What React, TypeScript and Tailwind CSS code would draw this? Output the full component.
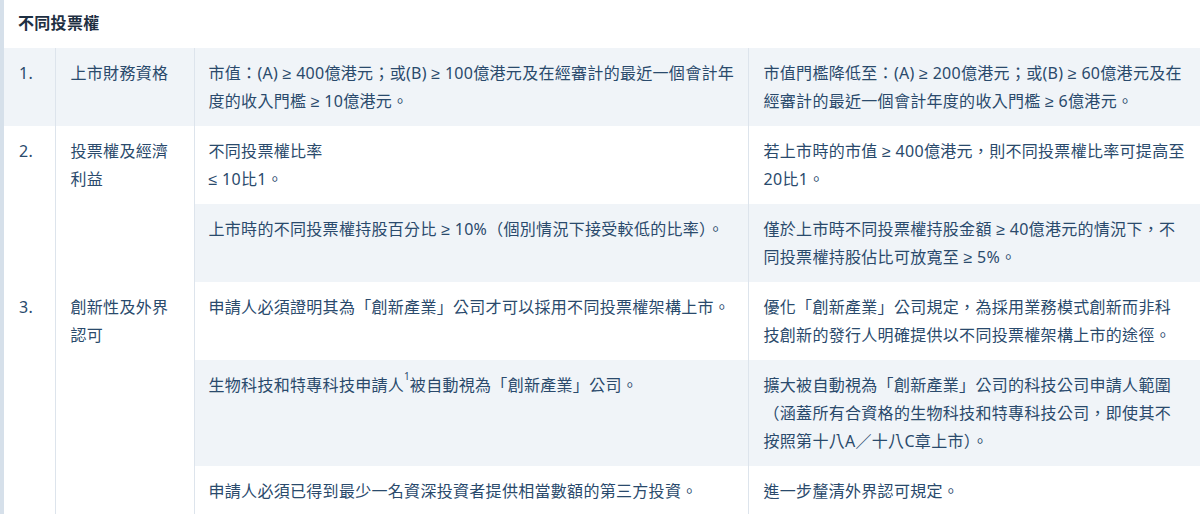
import React from 'react';

type Sub = { current: React.ReactNode; proposed: React.ReactNode };
type Row = { no: string; topic: string; subs: Sub[] };

const rows: Row[] = [
  {
    no: '1.',
    topic: '上市財務資格',
    subs: [
      {
        current: '市值：(A) ≥ 400億港元；或(B) ≥ 100億港元及在經審計的最近一個會計年度的收入門檻 ≥ 10億港元。',
        proposed: '市值門檻降低至：(A) ≥ 200億港元；或(B) ≥ 60億港元及在經審計的最近一個會計年度的收入門檻 ≥ 6億港元。',
      },
    ],
  },
  {
    no: '2.',
    topic: '投票權及經濟利益',
    subs: [
      {
        current: (
          <>
            不同投票權比率
            <br />≤ 10比1。
          </>
        ),
        proposed: '若上市時的市值 ≥ 400億港元，則不同投票權比率可提高至20比1。',
      },
      {
        current: '上市時的不同投票權持股百分比 ≥ 10%（個別情況下接受較低的比率）。',
        proposed: '僅於上市時不同投票權持股金額 ≥ 40億港元的情況下，不同投票權持股佔比可放寬至 ≥ 5%。',
      },
    ],
  },
  {
    no: '3.',
    topic: '創新性及外界認可',
    subs: [
      {
        current: '申請人必須證明其為「創新產業」公司才可以採用不同投票權架構上市。',
        proposed: '優化「創新產業」公司規定，為採用業務模式創新而非科技創新的發行人明確提供以不同投票權架構上市的途徑。',
      },
      {
        current: (
          <>
            生物科技和特專科技申請人<sup className="text-[10px] align-super leading-none tracking-normal">1</sup>被自動視為「創新產業」公司。
          </>
        ),
        proposed: '擴大被自動視為「創新產業」公司的科技公司申請人範圍（涵蓋所有合資格的生物科技和特專科技公司，即使其不按照第十八A／十八C章上市）。',
      },
      {
        current: '申請人必須已得到最少一名資深投資者提供相當數額的第三方投資。',
        proposed: '進一步釐清外界認可規定。',
      },
    ],
  },
];

const cell = 'align-top px-[15px] py-[11px] border-r border-[#dde4ec]';

export default function App() {
  let trIndex = 0;
  return (
    <div
      className="w-[1200px] h-[514px] overflow-hidden bg-white border-l-4 border-[#d6e0ea] text-[16px] leading-[28px] tracking-[0.3px] text-[#2a4a6c]"
      style={{ fontFamily: '"Noto Sans", "Liberation Sans", "Noto Sans CJK TC", sans-serif' }}
    >
      <table className="w-full table-fixed border-collapse">
        <colgroup>
          <col className="w-[51px]" />
          <col className="w-[139px]" />
          <col className="w-[554px]" />
          <col />
        </colgroup>
        <thead>
          <tr>
            <th
              colSpan={4}
              className="text-left font-semibold text-[#1e2f42] px-[14px] pt-[9px] pb-[11px] leading-[28px]"
            >
              不同投票權
            </th>
          </tr>
        </thead>
        <tbody>
          {rows.map((row) =>
            row.subs.map((sub, i) => {
              const striped = trIndex++ % 2 === 0;
              const bg = striped ? 'bg-[#f0f4f8]' : 'bg-white';
              return (
                <tr key={row.no + i} className={bg}>
                  {i === 0 && (
                    <>
                      <td rowSpan={row.subs.length} className={cell}>
                        {row.no}
                      </td>
                      <td rowSpan={row.subs.length} className={cell}>
                        {row.topic}
                      </td>
                    </>
                  )}
                  <td className={cell + ' pl-[14px] pr-[8px]'}>{sub.current}</td>
                  <td className="align-top px-[15px] py-[11px]">{sub.proposed}</td>
                </tr>
              );
            })
          )}
        </tbody>
      </table>
    </div>
  );
}
